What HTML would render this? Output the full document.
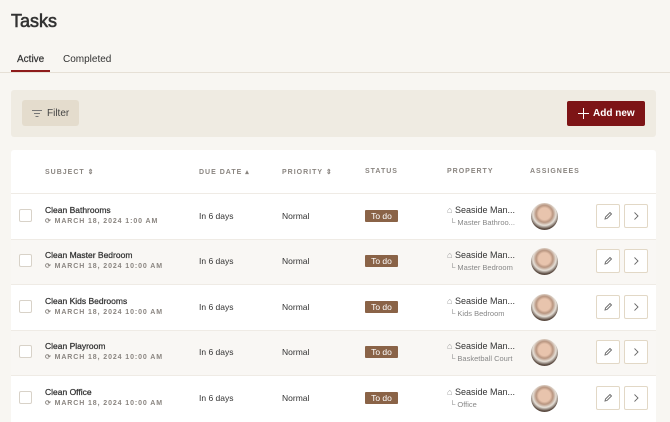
<!DOCTYPE html>
<html><head><style>
*{box-sizing:border-box;margin:0;padding:0}
body{width:670px;height:422px;overflow:hidden;background:#f8f6f2;font-family:"Liberation Sans",sans-serif;color:#2b2b2b;position:relative}
.a{position:absolute}
h1{position:absolute;left:11px;top:11px;font-size:18px;font-weight:normal;color:#333;-webkit-text-stroke:.6px #333}
.tab{position:absolute;top:54px;font-size:10px;color:#333}
.hd{position:absolute;top:168px;font-size:7px;letter-spacing:1px;color:#8a8580;font-weight:bold}
.row{position:absolute;left:11px;width:645px;height:45.5px;border-top:1px solid #efebe5}
.cb{position:absolute;width:13px;height:13px;border:1px solid #d8d2c8;border-radius:2px;background:#fff}
.t{position:absolute;font-size:8.5px;color:#333;white-space:nowrap}
.sub{position:absolute;font-size:7px;letter-spacing:.9px;color:#8a8580;font-weight:bold;white-space:nowrap}
.st{position:absolute;width:33px;height:12px;background:#8a6347;color:#fff;font-size:8.5px;text-align:center;line-height:12px;border-radius:1px}
.av{position:absolute;width:27px;height:27px;border-radius:50%;background:radial-gradient(circle at 50% 40%,#e8c4ad 0 28%,#b89580 40%,#e6e0d8 55%,#5a4a40 72%)}
.btn{position:absolute;width:24px;height:24px;border:1px solid #e2d8c6;border-radius:2px;background:#fff;display:flex;align-items:center;justify-content:center}
</style></head><body>
<h1>Tasks</h1>
<div class="tab" style="left:17px;-webkit-text-stroke:.2px #333">Active</div>
<div class="tab" style="left:63px">Completed</div>
<div class="a" style="left:0;top:72px;width:670px;height:1px;background:#e6e0d6"></div>
<div class="a" style="left:11px;top:70px;width:39px;height:2px;background:#8e1b1b"></div>
<div class="a" style="left:11px;top:90px;width:645px;height:47px;background:#efebe2;border-radius:3px"></div>
<div class="a" style="left:22px;top:100px;width:57px;height:26px;background:#e4dccd;border-radius:3px;font-size:10px;color:#444;line-height:28px;padding-left:25px">Filter</div>
<svg class="a" style="left:32px;top:110px" width="10" height="8"><path d="M0 .5H10M2 3.5H8M3.5 6.5H6.5" stroke="#777" stroke-width="1"/></svg>
<div class="a" style="left:567px;top:101px;width:78px;height:25px;background:#7d1416;border-radius:2px;color:#fff;font-size:10px;font-weight:bold;line-height:25px;padding-left:26px">Add new</div>
<svg class="a" style="left:578px;top:108px" width="11" height="11"><path d="M5.5 0V11M0 5.5H11" stroke="#fff" stroke-width="1"/></svg>
<div class="a" style="left:11px;top:150px;width:645px;height:272px;background:#fff;border-radius:3px 3px 0 0"></div>
<div class="hd" style="left:45px">SUBJECT ⇕</div>
<div class="hd" style="left:199px">DUE DATE ▴</div>
<div class="hd" style="left:282px">PRIORITY ⇕</div>
<div class="hd" style="left:365px">STATUS</div>
<div class="hd" style="left:447px">PROPERTY</div>
<div class="hd" style="left:530px">ASSIGNEES</div>
<div id="rows"></div>
<script>
var d=[["Clean Bathrooms","MARCH 18, 2024 1:00 AM","Master Bathroo..."],["Clean Master Bedroom","MARCH 18, 2024 10:00 AM","Master Bedroom"],["Clean Kids Bedrooms","MARCH 18, 2024 10:00 AM","Kids Bedroom"],["Clean Playroom","MARCH 18, 2024 10:00 AM","Basketball Court"],["Clean Office","MARCH 18, 2024 10:00 AM","Office"]];
var h="";
var pen='<svg width="10" height="10"><path d="M2 8L2.5 6L7 1.5L8.5 3L4 7.5Z" fill="none" stroke="#666" stroke-width=".9"/></svg>';
var chev='<svg width="8" height="10"><path d="M2.5 1.5L6 5L2.5 8.5" fill="none" stroke="#666" stroke-width=".9"/></svg>';
d.forEach(function(r,i){var y=193+i*45.5;var c=y+22.5;
h+='<div class="row" style="top:'+y+'px;background:'+(i%2?'#f9f7f4':'#fff')+'"></div>';
h+='<div class="cb" style="left:19px;top:'+(c-7)+'px"></div>';
h+='<div class="t" style="left:45px;top:'+(c-11)+'px;-webkit-text-stroke:.25px #333">'+r[0]+'</div>';
h+='<div class="sub" style="left:45px;top:'+(c+1)+'px">⟳ '+r[1]+'</div>';
h+='<div class="t" style="left:199px;top:'+(c-5)+'px">In 6 days</div>';
h+='<div class="t" style="left:282px;top:'+(c-5)+'px">Normal</div>';
h+='<div class="st" style="left:365px;top:'+(c-6)+'px">To do</div>';
h+='<div class="t" style="left:447px;top:'+(c-11)+'px;font-size:9px"><span style="color:#999">⌂</span> Seaside Man...</div>';
h+='<div class="t" style="left:450px;top:'+(c+2)+'px;font-size:7.5px;color:#888">└ '+r[2]+'</div>';
h+='<div class="av" style="left:531px;top:'+(c-13)+'px"></div>';
h+='<div class="btn" style="left:596px;top:'+(c-12)+'px">'+pen+'</div>';
h+='<div class="btn" style="left:624px;top:'+(c-12)+'px">'+chev+'</div>';
});
document.getElementById("rows").innerHTML=h;
</script>
</body></html>
